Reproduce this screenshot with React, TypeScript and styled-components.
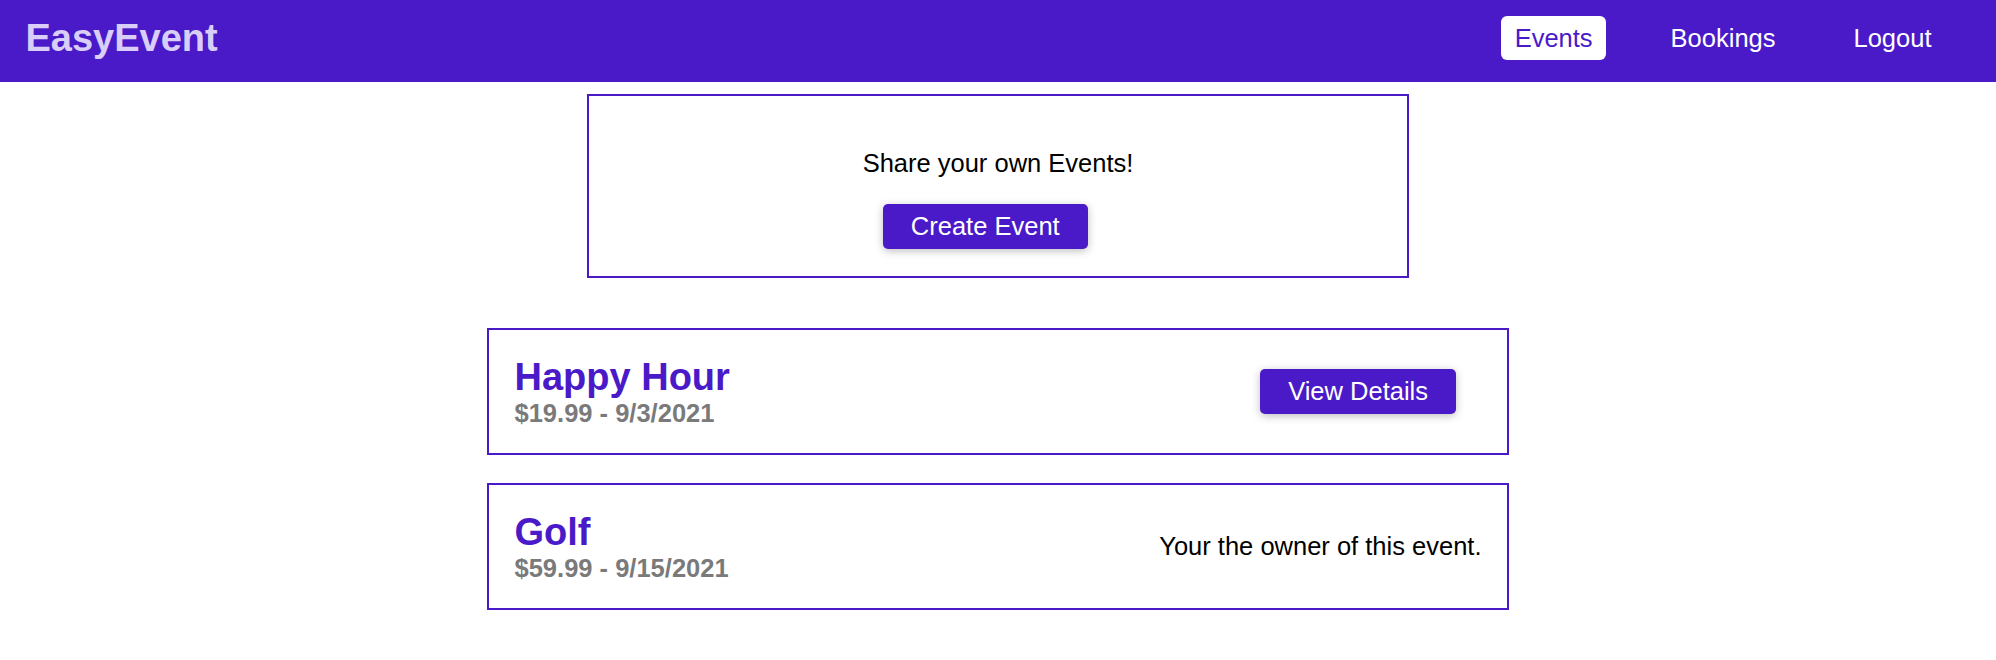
import styled, { createGlobalStyle } from "styled-components";

const purple = "#4a1ac9";

const GlobalStyle = createGlobalStyle`
  body {
    margin: 0;
    font-family: "Liberation Sans", Arial, Helvetica, sans-serif;
    background: #fff;
  }
`;

const Navbar = styled.header`
  height: 82px;
  box-sizing: border-box;
  padding: 0 25.5px 6px;
  background: ${purple};
  display: flex;
  align-items: center;
  justify-content: space-between;
`;

const Logo = styled.h1`
  margin: 0;
  font-size: 38px;
  font-weight: bold;
  color: #d9cdf9;
`;

const NavList = styled.ul`
  list-style: none;
  margin: 0;
  padding: 0;
  display: flex;
  align-items: center;
`;

const NavItem = styled.li`
  margin: 0 25.5px;
`;

const NavLink = styled.a<{ $active?: boolean }>`
  display: block;
  padding: 7.5px 13.5px;
  border-radius: 6px;
  font-size: 25.5px;
  text-decoration: none;
  color: ${(props) => (props.$active ? purple : "#fff")};
  background: ${(props) => (props.$active ? "#fff" : "transparent")};
`;

const Main = styled.main`
  padding-top: 12px;
  display: flex;
  flex-direction: column;
  align-items: center;
`;

const ControlCard = styled.section`
  width: 822px;
  box-sizing: border-box;
  border: 2px solid ${purple};
  padding: 25.5px 25.5px 27px;
  text-align: center;
  margin-bottom: 50px;
`;

const Prompt = styled.p`
  margin: 27px 0 26.5px;
  font-size: 25.5px;
  color: #000;
`;

const Button = styled.button`
  font-family: inherit;
  font-size: 25.5px;
  line-height: 29px;
  color: #fff;
  background: ${purple};
  border: none;
  border-radius: 5px;
  padding: 8px 28px;
  margin-right: 25.5px;
  box-shadow: 0 2px 8px rgba(0, 0, 0, 0.26);
  cursor: pointer;
`;

const EventList = styled.ul`
  list-style: none;
  margin: 0;
  padding: 0;
  width: 1022px;
  display: flex;
  flex-direction: column;
  gap: 28px;
`;

const EventItem = styled.li`
  border: 2px solid ${purple};
  padding: 25.5px;
  display: flex;
  align-items: center;
  justify-content: space-between;
`;

const EventTitle = styled.h1`
  margin: 0;
  font-size: 38px;
  color: ${purple};
`;

const EventMeta = styled.h2`
  margin: 0;
  font-size: 25.5px;
  color: #7a7a7a;
`;

const OwnerNote = styled.p`
  margin: 0;
  font-size: 25.5px;
  color: #000;
`;

interface EventData {
  id: string;
  title: string;
  price: string;
  date: string;
  isOwner: boolean;
}

const events: EventData[] = [
  { id: "1", title: "Happy Hour", price: "$19.99", date: "9/3/2021", isOwner: false },
  { id: "2", title: "Golf", price: "$59.99", date: "9/15/2021", isOwner: true },
];

function App() {
  return (
    <>
      <GlobalStyle />
      <Navbar>
        <Logo>EasyEvent</Logo>
        <NavList>
          <NavItem><NavLink $active>Events</NavLink></NavItem>
          <NavItem><NavLink>Bookings</NavLink></NavItem>
          <NavItem><NavLink>Logout</NavLink></NavItem>
        </NavList>
      </Navbar>
      <Main>
        <ControlCard>
          <Prompt>Share your own Events!</Prompt>
          <Button>Create Event</Button>
        </ControlCard>
        <EventList>
          {events.map((ev) => (
            <EventItem key={ev.id}>
              <div>
                <EventTitle>{ev.title}</EventTitle>
                <EventMeta>{ev.price} - {ev.date}</EventMeta>
              </div>
              {ev.isOwner ? (
                <OwnerNote>Your the owner of this event.</OwnerNote>
              ) : (
                <Button>View Details</Button>
              )}
            </EventItem>
          ))}
        </EventList>
      </Main>
    </>
  );
}

export default App;
